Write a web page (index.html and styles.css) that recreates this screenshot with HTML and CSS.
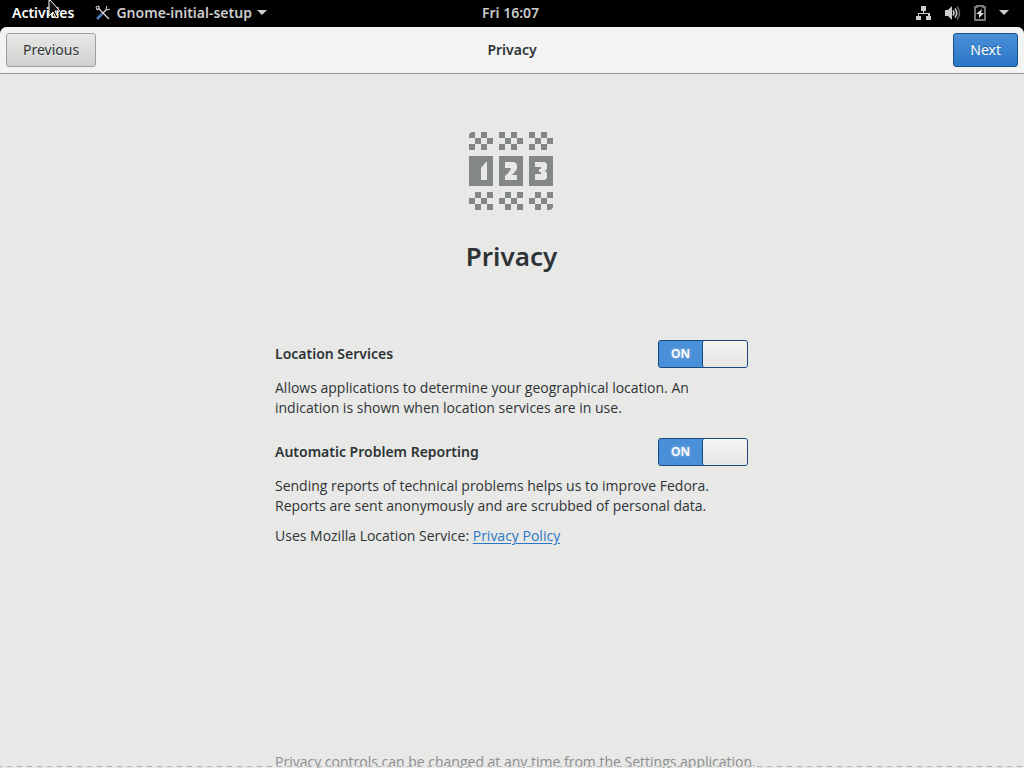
FILE: index.html
```html
<!DOCTYPE html>
<html lang="en">
<head>
    <meta charset="UTF-8">
    <meta name="viewport" content="width=device-width, initial-scale=1.0">
    <title>Privacy</title>
    <link rel="stylesheet" href="styles.css">
</head>
<body>

    <nav class="top-bar">
        <div class="top-left">
            <button class="top-item">Activities</button>
            <button class="top-item app-menu">
                <svg width="16" height="16" viewBox="0 0 16 16" aria-hidden="true">
                    <path d="M2 14l5-5" stroke="#4a7ab8" stroke-width="2.6"/>
                    <path d="M7 9l5-5M3 3l11 11" stroke="#d8d8d4" stroke-width="1.4"/>
                    <path d="M1 2l3-1v3L2 5zM12 1l-1 3 1 1 3-1" fill="none" stroke="#d8d8d4"/>
                </svg>
                <span>Gnome-initial-setup</span>
                <svg width="10" height="6" viewBox="0 0 10 6" aria-hidden="true"><path d="M0 0h10L5 5z" fill="#ccc"/></svg>
            </button>
        </div>
        <button class="top-item">Fri 16:07</button>
        <div class="top-right">
            <svg width="16" height="16" viewBox="0 0 16 16" aria-label="Network">
                <path d="M5 1h5v5H8v2h6v3h1v4h-5v-4h2V9H3v2h2v4H0v-4h2V8h5V6H5z" fill="#ccc"/>
            </svg>
            <svg width="16" height="16" viewBox="0 0 16 16" aria-label="Volume">
                <path d="M0 5h3l4-4v14l-4-4H0z" fill="#ccc"/>
                <path d="M8 5.500q2 2.500 0 5M10 3.500q3.500 4.500 0 9" fill="none" stroke="#ccc" stroke-width="1.600"/>
                <path d="M12 1.500q5 6.500 0 13" fill="none" stroke="#666" stroke-width="1.600"/>
            </svg>
            <svg width="12" height="16" viewBox="0 0 12 16" aria-label="Battery">
                <path d="M3 2V1h6v1h2v13H1V2z" fill="none" stroke="#777" stroke-width="2"/>
                <path d="M8 4L2 9h3v4l5-5H7z" fill="#ddd"/>
            </svg>
            <svg width="10" height="6" viewBox="0 0 10 6" aria-hidden="true"><path d="M0 0h10L5 5z" fill="#ccc"/></svg>
        </div>
    </nav>

    <div class="window">
        <header class="header-bar">
            <button class="btn">Previous</button>
            <div class="title">Privacy</div>
            <button class="btn btn-primary">Next</button>
        </header>

        <main class="page">
            <div class="content">
                <svg class="logo" width="85" height="78" viewBox="0 0 85 78" fill="#848787" aria-hidden="true">
                    <defs>
                        <path id="top" d="M12 0h6v6h-6zM6 6h6v6H6zM18 6h6v6h-6zM0 12h6v6H0zM12 12h6v6h-6z"/>
                        <path id="bottom" d="M6 0h6v6H6zM18 0h6v6h-6zM0 6h6v6H0zM12 6h6v6h-6zM6 12h6v6H6z"/>
                    </defs>
                    <use href="#top"/>
                    <use href="#top" x="30"/>
                    <use href="#top" x="60"/>
                    <path d="M0 6V4q0-4 4-4h2v6zM30 0h6v6h-6zM60 0h6v6h-6z"/>
                    <path d="M0 24h24v30H0zM30 24h24v30H30zM60 24h24v30H60z"/>
                    <path d="M12 36l5-6h1v18h-6zM36 30h9q3 1 3 4v2q0 2-5 7h5v5H36v-4q6-5 6-8h-6zM66 30h10l2 2v5l-2 2 2 2v5l-2 2H66v-6h6v-2h-2v-3h2v-2h-6z" fill="#e8e8e7"/>
                    <use href="#bottom" y="60"/>
                    <use href="#bottom" x="30" y="60"/>
                    <use href="#bottom" x="60" y="60"/>
                    <path d="M18 72h6v6h-6zM48 72h6v6h-6zM78 72h6v2q0 4-4 4h-2z"/>
                </svg>
                <h1>Privacy</h1>

                <div class="row">
                    <label class="name" for="location">Location Services</label>
                    <label class="switch">
                        <input type="checkbox" id="location" checked>
                        <span class="state">ON</span>
                        <span class="knob"></span>
                    </label>
                </div>
                <p>Allows applications to determine your geographical location. An<br>indication is shown when location services are in use.</p>

                <div class="row">
                    <label class="name" for="reporting">Automatic Problem Reporting</label>
                    <label class="switch">
                        <input type="checkbox" id="reporting" checked>
                        <span class="state">ON</span>
                        <span class="knob"></span>
                    </label>
                </div>
                <p class="tight">Sending reports of technical problems helps us to improve Fedora.<br>Reports are sent anonymously and are scrubbed of personal data.</p>
                <p>Uses Mozilla Location Service: <a href="#">Privacy Policy</a></p>

                <p class="footnote">Privacy controls can be changed at any time from the Settings application.</p>
            </div>
        </main>
    </div>

    <svg class="cursor" width="13" height="20" viewBox="0 0 13 20" aria-hidden="true">
        <path d="M1 0v16l4-4 3 6 2-1-3-6h5L2 0z" fill="#111" stroke="#fff"/>
    </svg>

</body>
</html>
```
FILE: styles.css
```css
* {
    box-sizing: border-box;
}
body {
    display: flex;
    flex-direction: column;
    height: 100vh;
    margin: 0;
    overflow: hidden;
    background-color: #000;
    color: #2e3436;
    font-family: "Noto Sans", "Open Sans", sans-serif;
    font-size: 14px;
    line-height: 20px;
}
button {
    font: inherit;
}
svg {
    flex: none;
}

/* shell panel */
.top-bar {
    display: grid;
    grid-template-columns: 1fr auto 1fr;
    align-items: center;
    height: 27px;
    padding: 0 15px 1px 12px;
}
.top-left, .top-right, .app-menu {
    display: flex;
    align-items: center;
}
.top-left {
    gap: 21px;
}
.top-right {
    justify-content: flex-end;
    gap: 13px;
}
.top-item {
    padding: 0;
    border: 0;
    background: none;
    color: #ccc;
    font-weight: 600;
}
.top-item:first-child {
    color: #fff;
}
.app-menu, .app-menu:last-child {
    gap: 5px;
    color: #ccc;
}

/* window */
.window {
    display: flex;
    flex: 1;
    flex-direction: column;
    min-height: 0;
    overflow: hidden;
    border-radius: 7px 7px 0 0;
    background-color: #e8e8e7;
}
.header-bar {
    display: grid;
    grid-template-columns: 1fr auto 1fr;
    align-items: center;
    height: 47px;
    padding: 0 6px;
    border-bottom: 1px solid #999a96;
    background-color: #f3f3f3;
}
.title, .name {
    font-weight: 600;
}
.btn {
    justify-self: start;
    height: 34px;
    padding: 0 16px;
    border: 1px solid #9d9f9b;
    border-radius: 3px;
    background: linear-gradient(#e8e8e7, #d0d0ce);
    color: #2e3436;
    text-shadow: 0 1px #eee;
}
.btn-primary {
    justify-self: end;
    border-color: #1c4f88;
    background: linear-gradient(#4a90d9, #2a76c6);
    color: #fff;
    text-shadow: 0 -1px #235f9f;
}

.page {
    position: relative;
    flex: 1;
    min-height: 0;
    overflow: hidden;
}
.page::after {
    content: "";
    position: absolute;
    right: 0;
    bottom: 1px;
    left: 0;
    height: 1px;
    background: repeating-linear-gradient(90deg, #b4b5b3 0 2px, #e8e8e7 2px 7px, #b4b5b3 7px 10px);
}
.content {
    display: flex;
    flex-direction: column;
    width: 474px;
    max-width: 100%;
    min-height: calc(100% + 4px);
    margin: 0 auto;
    padding: 58px 1px 0 0;
}
.logo {
    align-self: center;
}
h1 {
    margin: 27px 0 65px;
    font-size: 26px;
    line-height: 38px;
    font-weight: 600;
    text-align: center;
}
.row {
    display: flex;
    align-items: center;
    justify-content: space-between;
    height: 28px;
    margin-bottom: 10px;
}
p {
    margin: 0 0 20px;
    font-family: "Open Sans", "Noto Sans", sans-serif;
}
.tight {
    margin-bottom: 10px;
}
.footnote {
    margin: auto 0 0;
    color: #8b8e8f;
    white-space: nowrap;
}
a {
    color: #2a76c6;
    text-underline-offset: 2px;
}

.switch {
    position: relative;
    display: flex;
    width: 90px;
    height: 28px;
    border: 1px solid #184a80;
    border-radius: 3px;
    background-color: #4a90d9;
}
.switch input {
    position: absolute;
    inset: 0;
    margin: 0;
    opacity: 0;
}
.state {
    flex: 1;
    color: #fff;
    font-size: 12px;
    line-height: 26px;
    font-weight: 600;
    text-align: center;
    text-shadow: 0 0 3px #bcd;
}
.knob {
    width: 45px;
    border-left: 1px solid #184a80;
    border-radius: 2px;
    background: linear-gradient(#f4f4f3, #e6e6e5);
}
.switch input:not(:checked) ~ .state {
    visibility: hidden;
}

.cursor {
    position: absolute;
    top: 0;
    left: 48px;
}
```
